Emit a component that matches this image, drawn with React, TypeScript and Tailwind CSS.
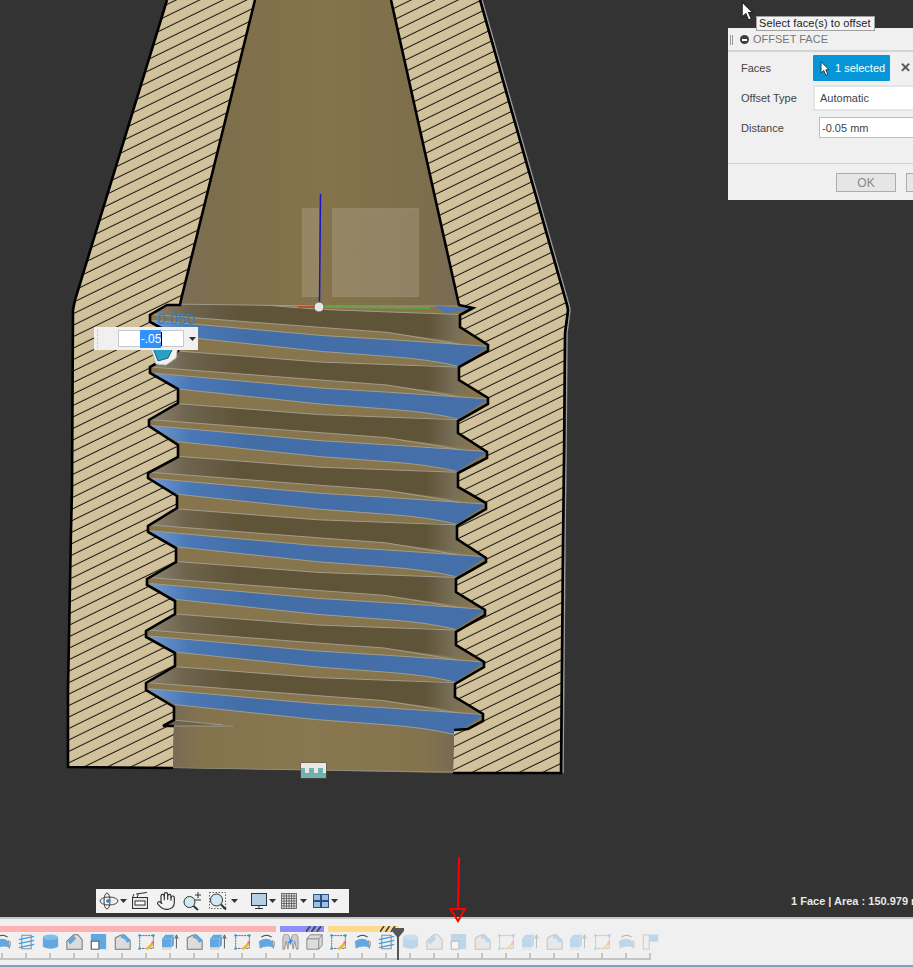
import React from 'react';
import { Hand } from 'lucide-react';

const P = 52.6;

const leftOuter = [[167, 0], [75, 300], [73, 310], [72, 490], [71, 530], [68, 690], [68, 767], [173, 768]];
const leftInner = [[255, 0], [181, 300], [180, 305], [167, 305], [150, 315], [150, 322], [178, 337], [178, 351], [150, 367], [150, 373], [178, 389], [178, 403], [149, 420], [149, 426], [178, 445], [178, 457], [148, 473], [148, 478], [177, 496], [177, 508], [148, 526], [148, 532], [176, 548], [176, 562], [147, 579], [147, 585], [175, 601], [175, 614], [146, 631], [146, 637], [175, 653], [175, 666], [146, 683], [146, 690], [174, 707], [174, 720], [163, 726], [174, 726]];
const rightOuter = [[480, 0], [567, 305], [568, 310], [565, 333], [564, 457], [563, 540], [561, 773], [453, 773]];
const rightInner = [[391, 0], [459, 305], [473, 308], [460, 315], [460, 327], [488, 345], [488, 351], [459, 367], [459, 380], [488, 398], [488, 404], [458, 421], [458, 433], [487, 452], [487, 458], [458, 473], [458, 487], [486, 503], [486, 509], [457, 526], [457, 539], [486, 558], [486, 562], [456, 579], [456, 592], [485, 610], [485, 615], [456, 632], [456, 645], [484, 662], [484, 667], [455, 684], [455, 697], [483, 714], [483, 721], [468, 729], [454, 730]];

const pts = (a: number[][]) => a.map(p => p.join(',')).join(' ');
const rev = (a: number[][]) => [...a].reverse();

const Section = () => (
  <svg width="913" height="917" viewBox="0 0 913 917" className="absolute left-0 top-0">
    <defs>
      <pattern id="hatch" width="20" height="10.3" patternUnits="userSpaceOnUse" patternTransform="rotate(-26)">
        <rect width="20" height="10.3" fill="#d2c29b" />
        <rect y="4.6" width="20" height="1" fill="#111" />
      </pattern>
      <linearGradient id="cone" gradientUnits="userSpaceOnUse" x1="180" x2="459" y1="0" y2="0">
        <stop offset="0" stopColor="#7b6f58" />
        <stop offset="0.12" stopColor="#7d6e4c" />
        <stop offset="0.5" stopColor="#85734a" />
        <stop offset="0.88" stopColor="#7d6e4c" />
        <stop offset="1" stopColor="#776b54" />
      </linearGradient>
      <linearGradient id="cyl" gradientUnits="userSpaceOnUse" x1="173" x2="453" y1="0" y2="0">
        <stop offset="0" stopColor="#776b55" />
        <stop offset="0.1" stopColor="#84734d" />
        <stop offset="0.5" stopColor="#89774f" />
        <stop offset="0.9" stopColor="#84734d" />
        <stop offset="1" stopColor="#786b52" />
      </linearGradient>
      <linearGradient id="dark" gradientUnits="userSpaceOnUse" x1="150" x2="472" y1="0" y2="0">
        <stop offset="0" stopColor="#8c8473" />
        <stop offset="0.12" stopColor="#6e634c" />
        <stop offset="0.28" stopColor="#5f5338" />
        <stop offset="0.86" stopColor="#5f5338" />
        <stop offset="0.95" stopColor="#797059" />
        <stop offset="1" stopColor="#85744f" />
      </linearGradient>
      <linearGradient id="blue" gradientUnits="userSpaceOnUse" x1="150" x2="488" y1="0" y2="0">
        <stop offset="0" stopColor="#6f9bd4" />
        <stop offset="0.12" stopColor="#4a78b6" />
        <stop offset="0.3" stopColor="#436da6" />
        <stop offset="1" stopColor="#4570aa" />
      </linearGradient>
      <clipPath id="core">
        <polygon points={pts([...leftInner, [173, 768], [453, 773], ...rev(rightInner)])} />
      </clipPath>
    </defs>

    <polygon points={pts([...leftOuter, ...rev(leftInner)])} fill="url(#hatch)" />
    <polygon points={pts([...rightInner, [453, 773], [561, 773], ...rev(rightOuter).slice(1)])} fill="url(#hatch)" />

    <g clipPath="url(#core)">
      <rect x="140" y="300" width="360" height="480" fill="#87754e" />
      <polygon points="173,700 453,700 453,773 173,768" fill="url(#cyl)" />
      {[0, 1, 2, 3, 4, 5, 6, 7].map(k => (
        <g key={k} transform={`translate(${-0.55 * (k - 1)},${P * (k - 1)})`}>
          <polygon points="178,351 320,362 400,365 458,366 459,380 472,396 387,385 320,380 150,367" fill="url(#dark)" />
          <path d="M150,373 L320,388 Q420,394 488,399 L458,419 Q430,412 387,409 L320,404 L178,389 Z" fill="url(#blue)" />
          <path d="M178,351 L320,362 L400,365 L458,367" fill="none" stroke="#a09d8d" />
          <path d="M150,367 L320,380 L387,385 L460,397" fill="none" stroke="#a09d8d" />
          <path d="M152,373 L320,388 Q420,394 488,399" fill="none" stroke="#a09d8d" />
          <path d="M178,389 L320,404 L387,409 Q430,412 458,419" fill="none" stroke="#a09d8d" />
        </g>
      ))}
      <polygon points="164,724 174,720 223,725 233,726 164,726" fill="#6f634b" />
      <path d="M174,720 L223,725 M163,726 L233,726" stroke="#9c9a8c" fill="none" />
      <polygon points="255,-2 181,300 167,304 320,306 459,306 391,-2" fill="url(#cone)" />
      <path d="M170,304 L320,306 L459,306" stroke="#9c9a8c" fill="none" />
      <polygon points="434,306 473,308 447,313" fill="#4a78b6" />
      <path d="M173,768 L453,772" stroke="#8e8d86" fill="none" />
    </g>

    <polyline points={pts(rev(rightOuter).slice(1).map(p => [p[0] + 2, p[1]]))} fill="none" stroke="#9a9a9a" strokeWidth="1.5" />
    <polyline points={pts(leftOuter)} fill="none" stroke="#000" strokeWidth="2.6" />
    <polyline points={pts(leftInner)} fill="none" stroke="#000" strokeWidth="2.6" />
    <polyline points={pts(rightOuter)} fill="none" stroke="#000" strokeWidth="2.6" />
    <polyline points={pts(rightInner)} fill="none" stroke="#000" strokeWidth="2.6" />

    <rect x="302.5" y="208.5" width="16" height="88" fill="#fff" fillOpacity="0.14" stroke="#fff" strokeOpacity="0.1" />
    <rect x="332.5" y="208.5" width="86" height="88" fill="#fff" fillOpacity="0.14" stroke="#fff" strokeOpacity="0.1" />
    <line x1="320.5" y1="194" x2="319.5" y2="302" stroke="#1a14c8" strokeWidth="1.5" />
    <line x1="298" y1="307" x2="314" y2="307" stroke="#d83a20" strokeWidth="1.5" />
    <line x1="324" y1="307" x2="430" y2="308" stroke="#3fbf2a" strokeWidth="1.5" />
    <circle cx="319" cy="307" r="5" fill="#e8e6e0" stroke="#6b6350" />

    <polygon points="150,345 178,345 176,358 166,365 156,364" fill="#f0f0ee" stroke="#bdbdbd" />
    <polygon points="153,348 173,348 168,358 158,361" fill="#2a9fc8" stroke="#1c5f7a" />

    <rect x="300.5" y="762.5" width="26" height="16" fill="#56544e" />
    <rect x="301" y="763" width="25" height="15" fill="#e9e8e2" />
    <polygon points="301,778 326,778 326,773 323,773 323,768 318,768 318,773 314,773 314,768 309,768 309,773 305,773 305,768 301,768" fill="#71b2b0" />
  </svg>
);

const Pointer = ({ className }: { className: string }) => (
  <svg viewBox="0 0 12 19" className={className}>
    <path d="M1 1 L1 15 L4.5 12 L7 18 L9.5 17 L7 11 L11 11 Z" fill="#fff" stroke="#222" strokeWidth="1" />
  </svg>
);

const OffsetDialog = () => (
  <div className="absolute left-[728px] top-[28px] flex h-[172px] w-[200px] flex-col bg-[#f0f0f0] font-['Liberation_Sans',sans-serif] text-[11px] text-[#444]">
    <div className="flex h-[24px] items-center border-b-2 border-[#d4d4d4] pl-[2px] pt-[1px]">
      <div className="h-[10px] w-[3px] border-x border-[#999]" />
      <div className="ml-[7px] flex h-[9px] w-[9px] items-center justify-center rounded-full bg-[#3c3c3c]">
        <div className="h-[2px] w-[5px] bg-white" />
      </div>
      <span className="ml-[4px] text-[#777]">OFFSET FACE</span>
    </div>
    <div className="mt-[3px] flex h-[26px] items-center pl-[13px]">
      <span className="w-[72px]">Faces</span>
      <div className="flex h-[26px] w-[77px] items-center rounded-[1px] bg-[#0696d7] pl-[7px] text-white">
        <Pointer className="h-[15px] w-[10px]" />
        <span className="ml-[5px]">1 selected</span>
      </div>
      <span className="ml-[10px] text-[13px] font-bold text-[#555]">✕</span>
    </div>
    <div className="mt-[4px] flex h-[26px] items-center pl-[13px]">
      <span className="w-[72px]">Offset Type</span>
      <div className="flex h-[26px] flex-1 items-center border-2 border-[#e4e4e4] bg-white pl-[5px]">Automatic</div>
    </div>
    <div className="mt-[6px] flex h-[21px] items-center pl-[13px]">
      <span className="w-[78px] pt-[1px]">Distance</span>
      <div className="flex h-[21px] flex-1 items-center border border-[#bdbdbd] bg-white pl-[2px] pt-[1px]">-0.05 mm</div>
    </div>
    <div className="mt-[25px] flex flex-1 items-start border-t border-[#cfcfcf] pl-[108px] pt-[9px]">
      <div className="flex h-[19px] w-[60px] shrink-0 items-center justify-center border border-[#acacac] bg-[#e6e6e6] text-[12px] text-[#888]">OK</div>
      <div className="ml-[10px] h-[19px] w-[60px] shrink-0 border border-[#acacac] bg-[#e6e6e6]" />
    </div>
  </div>
);

const Caret = ({ className }: { className: string }) => (
  <svg viewBox="0 0 7 4" className={`h-[4px] w-[7px] shrink-0 ${className}`}>
    <polygon points="0,0 7,0 3.5,4" fill="#333" />
  </svg>
);

const NavBar = () => (
  <div className="absolute left-[96px] top-[889px] flex h-[24px] w-[253px] items-center bg-[#f2f2f2]">
    <svg viewBox="0 0 22 20" className="ml-[2px] h-[20px] w-[22px]" fill="none" stroke="#444">
      <ellipse cx="11" cy="10" rx="9" ry="4" />
      <ellipse cx="9" cy="10" rx="3" ry="8" />
      <path d="M8 10h4M10 8v4" stroke="#1b7fd0" strokeWidth="1.4" />
    </svg>
    <Caret className="" />
    <svg viewBox="0 0 20 20" className="ml-[3px] h-[20px] w-[20px]" fill="#e6e6e6" stroke="#333">
      <rect x="2.5" y="6.5" width="15" height="11" />
      <rect x="5" y="10" width="10" height="4" fill="#fff" />
      <path d="M2.5 6.5 L4 3 M7 6.5 L8.5 3 M6 3 L17 1.5" fill="none" />
    </svg>
    <Hand className="ml-[6px] h-[20px] w-[20px] text-[#333]" strokeWidth={1.4} />
    <svg viewBox="0 0 20 20" className="ml-[6px] h-[20px] w-[20px]" fill="none" stroke="#333">
      <circle cx="7.5" cy="11" r="5.5" fill="#d3e8f5" />
      <path d="M11.5 15 L16 19" strokeWidth="2" />
      <path d="M13 4h6M16 1v6M13 9h6" />
    </svg>
    <svg viewBox="0 0 20 20" className="ml-[6px] h-[20px] w-[20px]" fill="none" stroke="#333">
      <rect x="1.5" y="1.5" width="16" height="16" strokeDasharray="1.5 1.5" stroke="#666" />
      <circle cx="8.5" cy="9" r="6" fill="#d3e8f5" />
      <path d="M13 13.5 L18 18.5" strokeWidth="2" />
    </svg>
    <Caret className="ml-[3px]" />
    <svg viewBox="0 0 20 20" className="ml-[11px] h-[20px] w-[20px]" stroke="#333">
      <rect x="2.5" y="2.5" width="15" height="12" fill="#b4cfe6" />
      <path d="M6 17.5h8M10 15v2" fill="none" />
    </svg>
    <Caret className="" />
    <svg viewBox="0 0 20 20" className="ml-[3px] h-[20px] w-[20px]" stroke="#555" fill="#e4e4e4" strokeWidth="0.8">
      <rect x="2.5" y="2.5" width="15" height="15" />
      <path d="M5 2.5v15M7.5 2.5v15M10 2.5v15M12.5 2.5v15M15 2.5v15M2.5 5h15M2.5 7.5h15M2.5 10h15M2.5 12.5h15M2.5 15h15" fill="none" />
    </svg>
    <Caret className="ml-[1px]" />
    <svg viewBox="0 0 20 20" className="ml-[4px] h-[20px] w-[20px]" stroke="#2f4f80" fill="#9cc0e0">
      <rect x="2.5" y="3.5" width="7" height="6" />
      <rect x="10.5" y="3.5" width="7" height="6" />
      <rect x="2.5" y="10.5" width="7" height="6" />
      <rect x="10.5" y="10.5" width="7" height="6" />
    </svg>
    <Caret className="" />
  </div>
);

const TimelineIcon = ({ kind }: { kind: string }) => {
  const blue = '#62a8e0';
  const gray = '#dcdcdc';
  const edge = '#777';
  return (
    <svg viewBox="0 0 20 20" preserveAspectRatio="none" className="h-[16px] w-[17px]">
      {kind === 'ring' && (
        <>
          <path d="M4 4 Q10 -1 16 4" fill="none" stroke="#444" strokeWidth="1.2" />
          <path d="M1 9 Q10 3 17 9 L18 17 Q10 14 2 18 Z" fill={blue} />
          <path d="M17 8 L20 11 L18 18 Z" fill={gray} stroke={edge} strokeWidth="0.8" />
        </>
      )}
      {kind === 'coil' && (
        <>
          <rect x="4.5" y="1.5" width="11" height="17" fill="#eee" stroke={edge} />
          <path d="M1 7 L19 3 M1 12 L19 8 M1 17 L19 13" stroke="#3f9fe6" strokeWidth="1.8" />
        </>
      )}
      {kind === 'cyl' && (
        <>
          <path d="M1 4 L19 4 L19 16 Q10 21 1 16 Z" fill={blue} />
          <ellipse cx="10" cy="4" rx="9" ry="3.5" fill="#82bdec" />
        </>
      )}
      {kind === 'chamfer' && (
        <>
          <path d="M1 19 L1 9 L9 1 L14 1 L19 7 L19 19 Z" fill={gray} stroke={edge} strokeWidth="1.2" />
          <path d="M2 9 L9 2 L12 6 L5 13 Z" fill={blue} />
        </>
      )}
      {kind === 'square' && (
        <>
          <rect x="1" y="0" width="18" height="19" fill={blue} />
          <rect x="1.5" y="9" width="9" height="10" fill="#fff" stroke="#555" strokeWidth="1.2" />
        </>
      )}
      {kind === 'fillet' && (
        <>
          <path d="M1.5 19 L1.5 5 Q7 1 12 1 L19 8 L19 19 Z" fill={gray} stroke={edge} strokeWidth="1.2" />
          <path d="M8 0.5 Q16 1 19.5 9 L15 11 Q13 5 8 5 Z" fill={blue} />
        </>
      )}
      {kind === 'sketch' && (
        <>
          <rect x="2" y="2" width="16" height="16" fill="none" stroke="#555" strokeDasharray="2.5 0.8" />
          <rect x="0.5" y="0.5" width="2.5" height="2.5" fill="#1f8fe0" />
          <rect x="17" y="0.5" width="2.5" height="2.5" fill="#1f8fe0" />
          <rect x="0.5" y="17" width="2.5" height="2.5" fill="#1f8fe0" />
          <path d="M9 18 L16 11 L18.5 13.5 L11.5 20 Z" fill="#efb34a" />
          <rect x="16" y="9.5" width="3" height="2.5" fill="#ef5350" />
        </>
      )}
      {kind === 'up' && (
        <>
          <path d="M0 6 L4 1 L14 1 L14 14 L11 17 L0 17 Z" fill={blue} />
          <path d="M11 6 L14 1 M0 6 L11 6 L11 17" fill="none" stroke="#8ac2ee" />
          <path d="M0 17 L11 17 L11 20 L0 20 Z" fill={gray} />
          <path d="M17 18 L17 3 M15 6 L17 1 L19 6" fill="none" stroke="#444" />
        </>
      )}
      {kind === 'joint' && (
        <>
          <path d="M1 19 L1 7 Q1 0 5 0 Q9 0 9 7 L7 19 L5 9 L3 19 Z" fill="#cfcfcf" stroke={edge} strokeWidth="0.8" />
          <path d="M19 19 L19 7 Q19 0 15 0 Q11 0 11 7 L13 19 L15 9 L17 19 Z" fill="#cfcfcf" stroke={edge} strokeWidth="0.8" />
          <path d="M7 11 L13 8 M10 6 L10 13" stroke="#2a86d8" strokeWidth="1.2" />
        </>
      )}
      {kind === 'box' && (
        <>
          <path d="M1 6 L5 1 L19 1 L19 14 L15 19 L1 19 Z" fill={gray} stroke={edge} />
          <path d="M1 6 L15 6 L19 1 M15 6 L15 19" fill="none" stroke={edge} />
        </>
      )}
      {kind === 'flag' && (
        <>
          <rect x="1.5" y="1" width="7" height="18" fill="#eee" stroke={edge} />
          <rect x="9" y="0.5" width="10" height="9" fill={blue} />
        </>
      )}
    </svg>
  );
};

const done = ['ring', 'coil', 'cyl', 'chamfer', 'square', 'fillet', 'sketch', 'up', 'fillet', 'up', 'sketch', 'ring', 'joint', 'box', 'sketch', 'ring', 'coil'];
const todo = ['cyl', 'chamfer', 'square', 'fillet', 'sketch', 'up', 'fillet', 'up', 'sketch', 'ring', 'flag'];

const Slashes = () => (
  <svg viewBox="0 0 16 6" className="ml-auto mr-[2px] h-[6px] w-[16px]" stroke="#444" strokeWidth="1.6">
    <path d="M0 6 L4 0 M5.5 6 L9.5 0 M11 6 L15 0" />
  </svg>
);

const Timeline = () => (
  <div className="relative flex h-[50px] shrink-0 flex-col">
    <div className="flex flex-1 flex-col border-t-2 border-[#c6c6c6] bg-[#f0f0f0] pt-[7px]">
      <div className="flex h-[6px] gap-[4px]">
        <div className="w-[276px] bg-[#ffb2b4]" />
        <div className="flex w-[44px] bg-[#8f8ffb]"><Slashes /></div>
        <div className="flex w-[70px] bg-[#ffd98c]"><Slashes /></div>
      </div>
      <div className="ml-[-10px] flex">
        {done.map((k, i) => (
          <div key={i} className="flex w-[24px] flex-col items-center">
            <div className="flex h-[21px] items-start pt-[2px]"><TimelineIcon kind={k} /></div>
            <div className="h-[5px] w-[2px] bg-[#c4c4c4]" />
          </div>
        ))}
        {todo.map((k, i) => (
          <div key={i} className="flex w-[24px] flex-col items-center">
            <div className="flex h-[21px] items-start pt-[2px] opacity-35"><TimelineIcon kind={k} /></div>
            <div className="h-[5px] w-[2px] bg-[#c4c4c4]" />
          </div>
        ))}
      </div>
      <div className="h-[2px] w-[651px] bg-[#c4c4c4]" />
    </div>
    <div className="h-[2px] bg-[#7f9fbd]" />
    <svg viewBox="0 0 12 32" className="absolute left-[392px] top-[11px] h-[32px] w-[12px]">
      <path d="M0 0 H12 V3 L7 9 V32 H5 V9 L0 3 Z" fill="#555" />
    </svg>
  </div>
);

const App: React.FC = () => (
  <div className="relative flex h-[967px] w-[913px] flex-col overflow-hidden bg-[#333333] font-['Liberation_Sans',sans-serif]">
    <div className="relative h-[917px] shrink-0">
      <Section />

      <span className="absolute left-[157px] top-[310px] text-[15px] leading-[18px] text-[#2f7fc6]">0.050</span>
      <div className="absolute left-[94px] top-[327px] flex h-[23px] w-[104px] items-center bg-[#f0f0f0] pl-[3px]">
        <div className="h-[19px] w-[3px] border-l border-dotted border-[#bbb]" />
        <div className="ml-[18px] flex h-[17px] w-[66px] items-center justify-center border border-[#c8c8c8] bg-white text-[12px] text-white">
          <span className="bg-[#3390ff] pl-[1px]">-.05</span>
          <span className="h-[14px] w-[1px] bg-black" />
        </div>
        <svg viewBox="0 0 7 4" className="ml-[5px] h-[4px] w-[7px]">
          <polygon points="0,0 7,0 3.5,4" fill="#333" />
        </svg>
      </div>

      <Pointer className="absolute left-[741px] top-[1px] h-[20px] w-[13px]" />
      <div className="absolute left-[756px] top-[16px] z-10 flex h-[15px] w-[119px] items-center border border-[#a0a0a0] bg-[#f4f4f4] pl-[2px] text-[11px] tracking-[0.1px] text-[#222]">
        Select face(s) to offset
      </div>
      <OffsetDialog />

      <NavBar />
      <span className="absolute left-[791px] top-[894px] whitespace-nowrap text-[11px] font-bold leading-[14px] text-[#e8e8e8]">1 Face | Area : 150.979 mm</span>
    </div>
    <Timeline />

    <svg viewBox="0 0 20 70" className="absolute left-[449px] top-[855px] h-[70px] w-[20px]" fill="none" stroke="#f00" strokeWidth="2">
      <path d="M10 2 L9 53 M1.5 54 L16 54 L9 66 Z" />
    </svg>
  </div>
);

export default App;
